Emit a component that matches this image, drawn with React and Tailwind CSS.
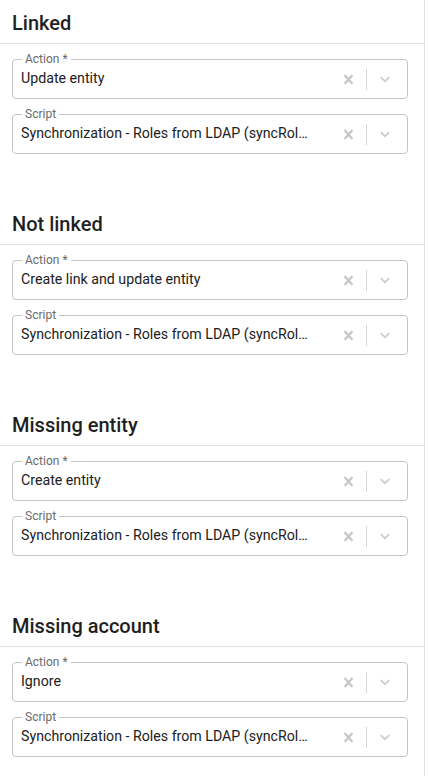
import React from "react";

const ClearIcon = () => (
  <svg width="19" height="19" viewBox="0 0 20 20" fill="#c6c6c6" aria-hidden="true">
    <path d="M14.348 14.849c-0.469 0.469-1.229 0.469-1.697 0l-2.651-3.030-2.651 3.029c-0.469 0.469-1.229 0.469-1.697 0-0.469-0.469-0.469-1.229 0-1.697l2.758-3.15-2.759-3.152c-0.469-0.469-0.469-1.228 0-1.697s1.228-0.469 1.697 0l2.652 3.031 2.651-3.031c0.469-0.469 1.228-0.469 1.697 0s0.469 1.229 0 1.697l-2.758 3.152 2.758 3.15c0.469 0.469 0.469 1.229 0 1.698z" />
  </svg>
);

const ChevronIcon = () => (
  <svg width="16" height="16" viewBox="0 0 20 20" fill="#cccccc" aria-hidden="true">
    <path d="M4.516 7.548c0.436-0.446 1.043-0.481 1.576 0l3.908 3.747 3.908-3.747c0.533-0.481 1.141-0.446 1.574 0 0.436 0.445 0.408 1.197 0 1.615-0.406 0.418-4.695 4.502-4.695 4.502-0.217 0.223-0.502 0.335-0.787 0.335s-0.57-0.112-0.789-0.335c0 0-4.287-4.084-4.695-4.502s-0.436-1.17 0-1.615z" />
  </svg>
);

function Field({ label, value }) {
  return (
    <div className="relative h-[40px] rounded-[4px] border border-[#c4c4c4] flex items-center">
      <span className="absolute left-[9px] top-[-8px] bg-white px-[3px] text-[12px] leading-[14px] text-[#6b6b6b]">
        {label}
      </span>
      <div className="flex-1 min-w-0 pl-[8px] pr-[27px]">
        <div className="text-[14.2px] text-[#212121] whitespace-nowrap overflow-hidden text-ellipsis">
          {value}
        </div>
      </div>
      <div className="flex items-center shrink-0 pr-[12px]">
        <div className="w-[20px] flex justify-center">
          <ClearIcon />
        </div>
        <div className="w-px h-[21px] bg-[#d6d6d6] mx-[8px]" />
        <div className="w-[20px] flex justify-center">
          <ChevronIcon />
        </div>
      </div>
    </div>
  );
}

const SCRIPT = "Synchronization - Roles from LDAP (syncRoles)";

const sections = [
  { title: "Linked", action: "Update entity" },
  { title: "Not linked", action: "Create link and update entity" },
  { title: "Missing entity", action: "Create entity" },
  { title: "Missing account", action: "Ignore" },
];

export default function App() {
  return (
    <div className="w-[429px] h-[776px] overflow-hidden bg-white" style={{ fontFamily: "Roboto, 'Liberation Sans', sans-serif" }}>
      <div className="w-[425px] border-r border-[#e0e0e0] min-h-full">
        {sections.map((s) => (
          <section key={s.title} className="h-[201px]">
            <div className="h-[44px] border-b border-[#e0e0e0] pl-[12px] pt-[11px]">
              <h2 className="text-[20px] leading-[24px] font-medium text-[#1f1f1f]">{s.title}</h2>
            </div>
            <div className="pl-[12px] pr-[16px] pt-[15px] flex flex-col gap-[15px]">
              <Field label="Action *" value={s.action} />
              <Field label="Script" value={SCRIPT} />
            </div>
          </section>
        ))}
      </div>
    </div>
  );
}
